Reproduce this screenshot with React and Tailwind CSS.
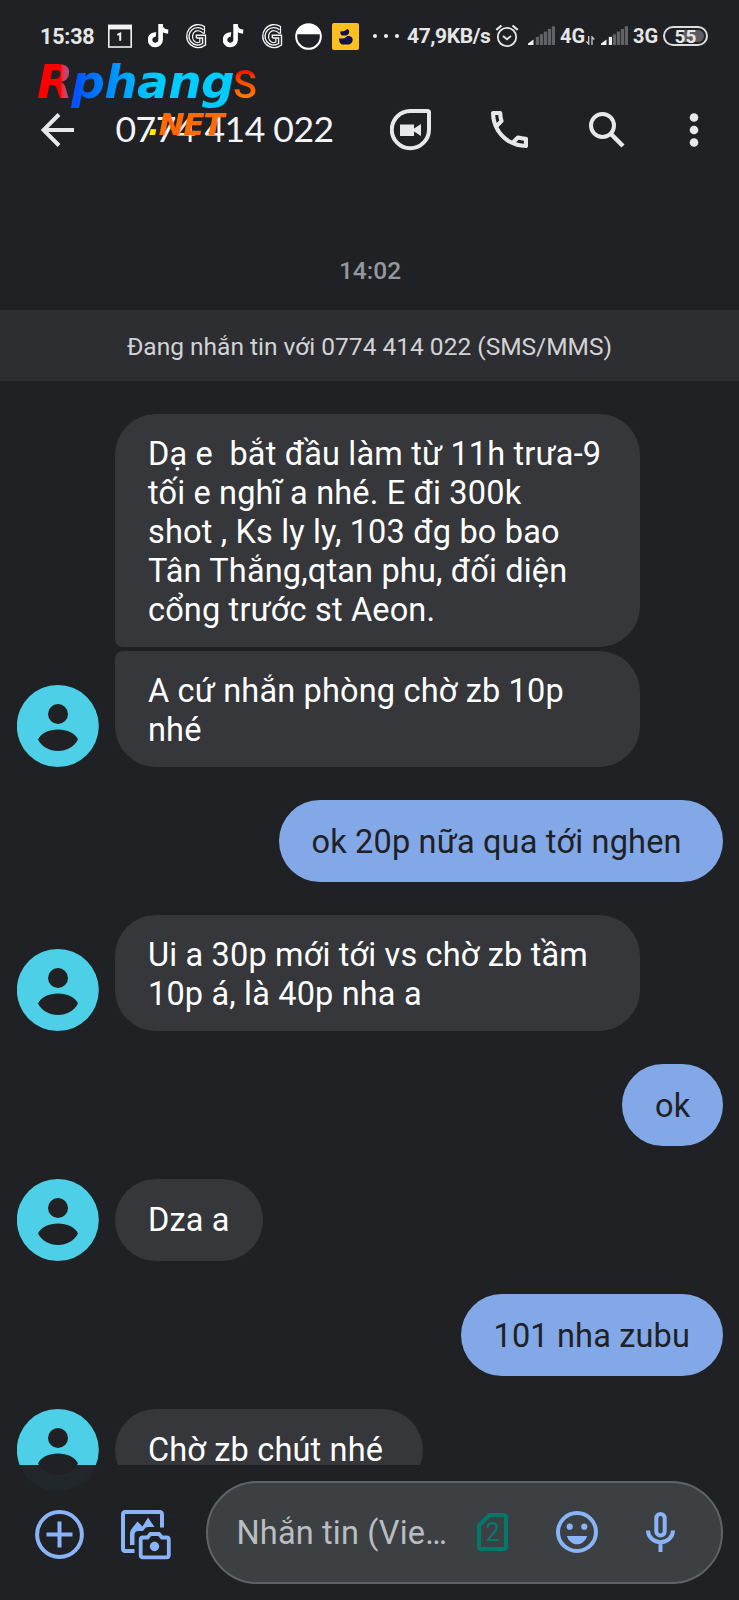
import React from "react";

function CalendarIcon() {
  return (
    <svg className="ml-[12px] h-[24px] w-[24px] shrink-0" viewBox="0 0 24 24" fill="none">
      <rect x="0.8" y="1.5" width="22.4" height="21.5" stroke="#f2f2f2" strokeWidth="1.6" />
      <rect x="0" y="0.8" width="24" height="4.6" fill="#f2f2f2" />
      <path d="M9.3 10.8l2.9-1.2v7.2" stroke="#f2f2f2" strokeWidth="2" />
    </svg>
  );
}

function NoteIcon({ className }) {
  return (
    <svg className={`h-[24px] w-[21px] shrink-0 ${className}`} viewBox="0 0 21 24" fill="none">
      <path d="M12.600 0v15.800a5.300 5.300 0 1 1-4.600-5.300" stroke="#fff" strokeWidth="4.600" />
      <path d="M12.600 1.200c.5 4 3.200 6.200 7.600 6.500" stroke="#fff" strokeWidth="4.200" />
    </svg>
  );
}

function GIcon({ className }) {
  return (
    <svg className={`h-[26px] w-[23px] shrink-0 ${className}`} viewBox="1 0 23 26" fill="none" stroke="#f5f5f5" strokeWidth="1.400">
      <path d="M21.500 3.500A11.500 11.500 0 1 0 22.500 22V12.200H13.300V15" />
      <path d="M20.500 6.800A8.700 8.700 0 1 0 19.600 20.500V15H13.300" />
      <path d="M21.500 3v7.200H20C17.500 7.200 13 6.800 10.800 9.600c-2.300 3-1.500 8.200 2 9.700 1.400.6 2.800.5 4-.2V15" strokeWidth="1.200" />
    </svg>
  );
}

function BowlIcon() {
  return (
    <svg className="ml-[12px] h-[27px] w-[27px] shrink-0" viewBox="0 0 27 27">
      <circle cx="13.500" cy="13.500" r="13.300" fill="#fff" />
      <path d="M2.400 11.300h22.200a11.300 11.300 0 1 1-22.200 0z" fill="#202124" />
    </svg>
  );
}

function BeeIcon() {
  return (
    <svg className="ml-[10px] h-[27px] w-[27px] shrink-0" viewBox="0 0 27 27">
      <rect width="27" height="27" rx="2" fill="#fdc01f" />
      <path d="M8.500 8.300c3 .3 5-.3 6.500-2.300 2.500.6 3 3.300 1.300 5.300-.5.700-1.300 1-2.300 1.100H9.800C8.500 11.500 8 10 8.500 8.300z" fill="#12124a" />
      <path d="M7.200 15.300c3.500.8 6.300-.2 8-2.300 3-.5 5.800 1.200 5.500 4-.3 2.800-2.200 4.500-4.700 4.500H9.800c-2-1-3-3.800-2.600-6.200z" fill="#12124a" />
    </svg>
  );
}

function AlarmIcon() {
  return (
    <svg className="ml-[4px] h-[24px] w-[24px] shrink-0" viewBox="0 0 24 24" fill="none" stroke="#e6e6e6">
      <circle cx="12" cy="13" r="9.200" strokeWidth="1.800" />
      <path d="M8 12l4 3.200 4-3.200" strokeWidth="1.900" />
      <path d="M1.300 5.800L6.500 1.500M22.700 5.800L17.500 1.500" strokeWidth="2.200" />
    </svg>
  );
}

function SignalIcon({ level, className }) {
  const bars = [0, 1, 2, 3, 4, 5];
  return (
    <svg className={`h-[19px] w-[27px] shrink-0 ${className}`} viewBox="0 0 27 19">
      {bars.map((i) => {
        const fill = i < level ? "#f0f0f0" : "#626366";
        if (i === 0) return <path key={i} d="M0 19v-1.500l5.500-4V19z" fill={fill} />;
        const h = 5.500 + i * 2.650;
        return <rect key={i} x={3.500 + i * 4 + 0.300} y={19 - h} width="3.200" height={h} fill={fill} />;
      })}
    </svg>
  );
}

function StatusBar() {
  return (
    <div className="flex h-[72px] items-center pl-[40px] text-[21px] leading-none font-bold text-[#e6e6e6]">
      <span className="w-[56px] pt-[1px] text-[21.500px] tracking-[-0.200px]">15:38</span>
      <CalendarIcon />
      <NoteIcon className="ml-[16px]" />
      <GIcon className="ml-[15px]" />
      <NoteIcon className="ml-[16px]" />
      <GIcon className="ml-[16px]" />
      <BowlIcon />
      <BeeIcon />
      <span className="ml-[14px] flex w-[26px] shrink-0 justify-between">
        <i className="size-[4px] rounded-full bg-[#f0f0f0]" />
        <i className="size-[4px] rounded-full bg-[#f0f0f0]" />
        <i className="size-[4px] rounded-full bg-[#f0f0f0]" />
      </span>
      <span className="ml-[8px] w-[84px] shrink-0 whitespace-nowrap tracking-[-0.400px]">47,9KB/s</span>
      <AlarmIcon />
      <SignalIcon level={1} className="-mt-[2px] ml-[9px]" />
      <span className="ml-[5px] w-[26px] shrink-0 text-[20px]">4G</span>
      <svg className="mt-[8px] h-[9px] w-[9px] shrink-0" viewBox="0 0 9 9" fill="none" stroke="#cfcfcf" strokeWidth="1.300">
        <path d="M2.700 0v8L.4 5.500M6 9V1l2.300 2.500" />
      </svg>
      <SignalIcon level={2} className="-mt-[2px] ml-[6px]" />
      <span className="ml-[5px] w-[26px] shrink-0 text-[20px]">3G</span>
      <span className="ml-[4px] flex h-[20px] w-[45px] shrink-0 items-center justify-center rounded-full border-2 border-[#dcdcdc] bg-linear-to-r from-[#202124] from-45% to-[#5c5d60] to-45% bg-clip-content p-[2px] text-[19px]">
        55
      </span>
    </div>
  );
}

function Watermark() {
  return (
    <div className="absolute top-[54px] left-[37px] font-['DejaVu_Sans',sans-serif] leading-none font-bold italic">
      <div className="flex h-[60px] items-start">
        <span className="bg-linear-to-r from-[#ff0000] from-60% to-[#5a3cc0] to-95% bg-clip-text pr-[4px] text-[47px] leading-[56px] text-transparent">
          R
        </span>
        <span className="-ml-[15px] bg-linear-to-r from-[#0a50ff] from-8% to-[#00ccff] to-52% bg-clip-text pr-[4px] pl-[9px] text-[47px] leading-[56px] tracking-[-0.600px] text-transparent">
          phang
        </span>
        <span className="-ml-[5px] bg-linear-to-b from-[#ff1500] from-35% to-[#ff7a00] to-80% bg-clip-text pt-[8px] font-[Roboto,sans-serif] text-[39px] leading-[46px] font-medium text-transparent not-italic">
          S
        </span>
      </div>
      <div className="-mt-[8px] ml-[111px] text-[31px] leading-[36px] tracking-[-1.200px] text-[#ff6a00]">
        <span className="text-[#ffee00]">.</span>NET
      </div>
    </div>
  );
}

function Header() {
  return (
    <header className="flex h-[114px] items-center pt-[1px] pl-[41px]">
      <svg className="h-[34px] w-[34px] shrink-0" viewBox="0 0 34 34" fill="none" stroke="#e8e8ec" strokeWidth="4">
        <path d="M33 17H3M18 1.500L2.500 17 18 32.500" />
      </svg>
      <h1 className="ml-[40.500px] w-[219.500px] whitespace-nowrap pb-[1px] font-[Lato,sans-serif] text-[35.500px] leading-none tracking-[-0.500px] text-[#f4f4f6]">0774 414 022</h1>
      <svg className="ml-[55px] h-[42px] w-[42px] shrink-0" viewBox="0 0 42 42" fill="none">
        <path d="M20.800 2H37.500Q39 2 39 3.500V20.800A18.600 18.600 0 1 1 20.800 2z" stroke="#e8e8ec" strokeWidth="4" />
        <path d="M10 15.500h14v4l7-4.500v12l-7-4.500v4.500H10z" fill="#e8e8ec" />
      </svg>
      <svg className="ml-[59px] h-[37px] w-[37px] shrink-0" viewBox="3 3 18 18" fill="#e8e8ec">
        <path d="M6.540 5c.06.89.21 1.760.45 2.590l-1.200 1.200c-.41-1.200-.67-2.470-.76-3.790h1.510m9.860 12.020c.85.24 1.720.39 2.600.45v1.490c-1.320-.09-2.590-.35-3.800-.75l1.200-1.190M7.500 3H4c-.55 0-1 .45-1 1 0 9.390 7.610 17 17 17 .55 0 1-.45 1-1v-3.490c0-.55-.45-1-1-1-1.240 0-2.450-.2-3.570-.57a.84.84 0 0 0-.31-.05c-.26 0-.51.1-.71.29l-2.200 2.200a15.150 15.150 0 0 1-6.590-6.590l2.200-2.200c.28-.28.36-.67.25-1.020A11.360 11.360 0 0 1 8.500 4c0-.55-.45-1-1-1z" />
      </svg>
      <svg className="ml-[61px] h-[36px] w-[36px] shrink-0" viewBox="0 0 36 36" fill="none" stroke="#e8e8ec" strokeWidth="4">
        <circle cx="13.500" cy="13.500" r="11.500" />
        <path d="M22 22l12 12" strokeWidth="4.500" />
      </svg>
      <svg className="ml-[64px] h-[34px] w-[10px] shrink-0" viewBox="0 0 10 34" fill="#e8e8ec">
        <circle cx="5" cy="4.500" r="4.300" />
        <circle cx="5" cy="17" r="4.300" />
        <circle cx="5" cy="29.500" r="4.300" />
      </svg>
    </header>
  );
}

function Avatar() {
  return (
    <svg className="mr-[16.500px] h-[82px] w-[82px] shrink-0" viewBox="0 0 82 82">
      <circle cx="40.800" cy="41" r="41" fill="#4dd0e7" />
      <circle cx="41" cy="29" r="10" fill="#202124" />
      <path d="M21 54.500C24 48 32 44.500 41 44.500s17 3.500 20 10C57 62 49.500 66 41 66s-16-4-20-11.500z" fill="#202124" />
    </svg>
  );
}

function Incoming({ children, shape = "rounded-[41px]", lines = "multi", avatar = true, width = "" }) {
  const pad = lines === "single" ? "pt-[22.500px] pb-[20.500px]" : "pt-[21px] pb-[17px]";
  return (
    <div className="flex items-end pl-[16.500px]">
      {avatar ? <Avatar /> : <div className="w-[98.500px] shrink-0" />}
      <div className={`bg-[#36373a] px-[33px] whitespace-nowrap text-white ${shape} ${pad} ${width}`}>{children}</div>
    </div>
  );
}

function Outgoing({ children, width = "" }) {
  return (
    <div className="flex justify-end pr-[16.500px]">
      <div className={`rounded-[41px] bg-[#83a8e7] px-[33px] pt-[23px] pb-[20px] whitespace-nowrap text-[#202124] ${width}`}>{children}</div>
    </div>
  );
}

function Composer() {
  return (
    <footer className="absolute inset-x-0 bottom-0 flex h-[135.500px] items-start bg-[#202124]/97 pt-[16px] pl-[35px]">
      <svg className="mt-[29px] h-[49px] w-[49px] shrink-0" viewBox="0 0 49 49" fill="none" stroke="#8ab4f8" strokeWidth="4">
        <circle cx="24.500" cy="24.500" r="22.400" />
        <path d="M24.500 11.500v26M11.500 24.500h26" />
      </svg>
      <svg className="mt-[29px] ml-[37px] h-[50px] w-[50px] shrink-0" viewBox="0 0 50 50" fill="none">
        <path d="M13.500 41H4.500Q2 41 2 38.500V4.500Q2 2 4.500 2h34Q41 2 41 4.500V17.500" stroke="#8ab4f8" strokeWidth="4" />
        <path d="M9 35V24c0-3 1-4.500 3-7l4.500-5.500 5 5 5.500-9L33.500 17H27c-1.500 0-2.500.8-3.500 2l-1.500 2h-4.500q-4 0-4 4V35z" fill="#8ab4f8" />
        <path d="M22 27.500h4.500l3-3.500h8.500l3 3.500H45.500q2.300 0 2.300 2.300V45q0 2.300-2.300 2.300H22q-2.300 0-2.300-2.300V29.800q0-2.300 2.300-2.300z" stroke="#8ab4f8" strokeWidth="3.800" />
        <circle cx="33.500" cy="36.500" r="4.700" fill="#8ab4f8" />
      </svg>
      <div className="ml-[34.500px] flex h-[103px] w-[517px] items-center rounded-full border-2 border-[#5f6367] bg-[#3c4043] pl-[29px]">
        <span className="w-[240px] pt-[2px] whitespace-nowrap text-[32.500px] tracking-[0.160px] text-[#b9bdc1]">Nhắn tin (Vie…</span>
        <svg className="h-[38px] w-[31px] shrink-0" viewBox="0 0 31 38" fill="none">
          <path d="M12.500 2H26.500Q29 2 29 4.500v29Q29 36 26.500 36h-22Q2 36 2 33.500V12.500z" stroke="#00796b" strokeWidth="4" />
          <text x="15.700" y="27.800" textAnchor="middle" fontSize="25" fill="#00796b">2</text>
        </svg>
        <svg className="ml-[48px] h-[42px] w-[42px] shrink-0" viewBox="0 0 42 42" fill="none">
          <circle cx="21" cy="21" r="19" stroke="#8ab4f8" strokeWidth="4" />
          <circle cx="13.700" cy="15.700" r="3.100" fill="#8ab4f8" />
          <circle cx="28.300" cy="15.700" r="3.100" fill="#8ab4f8" />
          <path d="M10.800 25h20.400c-1.700 5-5.600 8.300-10.200 8.300S12.500 30 10.800 25z" fill="#8ab4f8" />
        </svg>
        <svg className="ml-[48.500px] h-[40px] w-[29px] shrink-0" viewBox="0 0 29 40" fill="none" stroke="#8ab4f8" strokeWidth="4">
          <rect x="10.300" y="2" width="8.400" height="21.500" rx="4.200" />
          <path d="M2 18.500c0 6.600 5.600 11.700 12.500 11.700S27 25.100 27 18.500M14.500 30v10" />
        </svg>
      </div>
    </footer>
  );
}

export default function App() {
  return (
    <div className="relative h-[1600px] w-[739px] overflow-hidden bg-[#202124] font-[Roboto,sans-serif]">
      <StatusBar />
      <Header />
      <Watermark />
      <div className="pt-[67px] pb-[21px] pl-[1px] text-center text-[24.500px] leading-[36px] font-medium text-[#92989d]">14:02</div>
      <div className="flex h-[71px] items-center justify-center bg-[#2d2e31] pt-[4px] text-[24.500px] text-[#d2d3d6]">
        Đang nhắn tin với 0774 414 022 (SMS/MMS)
      </div>
      <main className="flex flex-col gap-[33px] pt-[32.500px] text-[32.500px] leading-[39px] tracking-[0.160px]">
        <div className="flex flex-col gap-[4px]">
          <Incoming avatar={false} shape="rounded-[41px] rounded-bl-[8px]" width="w-[525px]">
            <p className="whitespace-pre">{"Dạ e  bắt đầu làm từ 11h trưa-9\ntối e nghĩ a nhé. E đi 300k\nshot , Ks ly ly, 103 đg bo bao\nTân Thắng,qtan phu, đối diện\ncổng trước st Aeon."}</p>
          </Incoming>
          <Incoming shape="rounded-[41px] rounded-tl-[8px]" width="w-[525px]">
            <p className="whitespace-pre">{"A cứ nhắn phòng chờ zb 10p\nnhé"}</p>
          </Incoming>
        </div>
        <Outgoing width="w-[444px]">ok 20p nữa qua tới nghen</Outgoing>
        <Incoming width="w-[525px]">
          <p className="whitespace-pre">{"Ui a 30p mới tới vs chờ zb tầm\n10p á, là 40p nha a"}</p>
        </Incoming>
        <Outgoing width="w-[100.500px]">ok</Outgoing>
        <Incoming lines="single" width="w-[147.500px]">Dza a</Incoming>
        <Outgoing width="w-[262px]">101 nha zubu</Outgoing>
        <div>
          <Incoming lines="single" width="w-[307.500px]">Chờ zb chút nhé</Incoming>
          <div className="pl-[148px] text-[30px] text-black">59 phút</div>
        </div>
      </main>
      <Composer />
    </div>
  );
}
